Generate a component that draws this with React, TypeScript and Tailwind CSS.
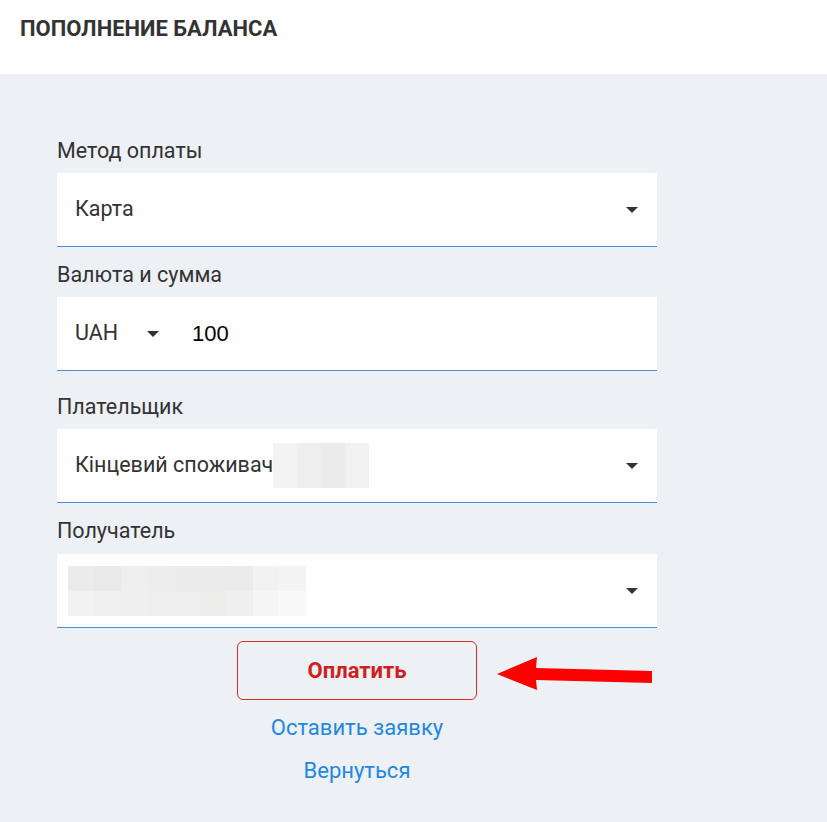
import type { ReactNode } from 'react'

const FONT = "font-['Roboto',_'Noto_Sans',_sans-serif]"

function Caret() {
  return (
    <svg width="12" height="6" viewBox="0 0 12 6" className="shrink-0">
      <path d="M0 0 L12 0 L6 6 Z" fill="#333" />
    </svg>
  )
}

function Label({ children, className = '' }: { children: ReactNode; className?: string }) {
  return <div className={`text-[21.5px] leading-[22px] text-[#333] ${className}`}>{children}</div>
}

function Field({ children, className = '', pad = 'pl-[18px]' }: { children: ReactNode; className?: string; pad?: string }) {
  return (
    <div className={`flex h-[74px] items-center bg-white border-b border-[#4a90e2] pr-[19px] ${pad} ${className}`}>
      {children}
    </div>
  )
}

const PAYER_BLUR = ['#f3f3f3', '#eeeeee', '#ebebeb', '#f1f1f1']
const RECIPIENT_BLUR = [
  ['#ebebeb', '#e8e9e8', '#eeeeee', '#ededed', '#ececec', '#ececec', '#ebebeb', '#f2f2f2', '#f4f4f4'],
  ['#f2f2f2', '#f0f0f0', '#efefef', '#eeeeee', '#eeeeee', '#ededec', '#efefef', '#f5f5f5', '#f9f9f9'],
]

function RedArrow() {
  return (
    <svg width="160" height="36" viewBox="0 0 160 36" className="absolute left-[495px] top-[655px]">
      <path d="M2 19 L42 2 L41 13 L157 16 L157 28 L41 25 L42 35 Z" fill="#ff0000" />
    </svg>
  )
}

export default function App() {
  return (
    <div className={`relative min-h-[822px] w-[827px] bg-[#edf0f4] ${FONT}`}>
      <div className="h-[74px] bg-white px-5 pt-[17px]">
        <h1 className="text-[22px] font-bold leading-[24px] text-[#333]">ПОПОЛНЕНИЕ БАЛАНСА</h1>
      </div>

      <div className="ml-[57px] w-[600px] pt-[66px]">
        <Label>Метод оплаты</Label>
        <Field className="mt-[11px]">
          <span className="flex-1 text-[21.5px] text-[#333]">Карта</span>
          <Caret />
        </Field>

        <Label className="mt-[17px]">Валюта и сумма</Label>
        <Field className="mt-[11px]">
          <span className="w-[72px] text-[21.5px] text-[#333]">UAH</span>
          <Caret />
          <span className="ml-[33px] font-['Liberation_Sans',_sans-serif] text-[22px] text-black">100</span>
        </Field>

        <Label className="mt-[25px]">Плательщик</Label>
        <Field className="mt-[11px]">
          <span className="text-[21.5px] text-[#333]">Кінцевий споживач</span>
          <span className="flex h-[45px]">
            {PAYER_BLUR.map((c, i) => (
              <span key={i} className="w-6" style={{ backgroundColor: c }} />
            ))}
          </span>
          <span className="flex-1" />
          <Caret />
        </Field>

        <Label className="mt-[17px]">Получатель</Label>
        <Field className="mt-3" pad="pl-[11px]">
          <div className="flex flex-col">
            {RECIPIENT_BLUR.map((row, r) => (
              <div key={r} className="flex h-[25px]">
                {row.map((c, i) => (
                  <span key={i} className="w-[26.4px]" style={{ backgroundColor: c }} />
                ))}
              </div>
            ))}
          </div>
          <span className="flex-1" />
          <Caret />
        </Field>

        <div className="mt-[13px] flex flex-col items-center">
          <button className="h-[59px] w-[240px] rounded-md border border-[#d32f2f] text-[22px] font-bold text-[#d01f1f]">
            Оплатить
          </button>
          <a className="mt-[15px] text-[22px] leading-[26px] text-[#1e88e5]">Оставить заявку</a>
          <a className="mt-[17px] text-[22px] leading-[26px] text-[#1e88e5]">Вернуться</a>
        </div>
      </div>

      <RedArrow />
    </div>
  )
}
